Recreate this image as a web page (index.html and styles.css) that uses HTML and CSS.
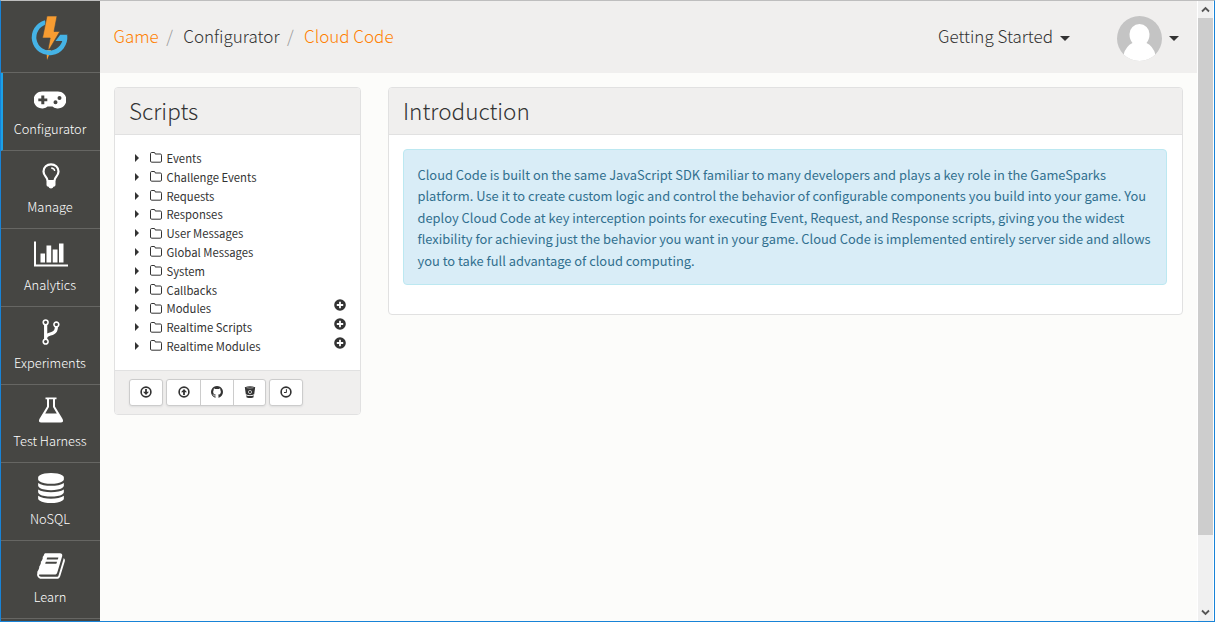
FILE: index.html
```html
<!DOCTYPE html>
<html lang="en">
<head>
<meta charset="utf-8">
<title>Cloud Code</title>
<link rel="stylesheet" href="styles.css">
</head>
<body>
<svg class="defs" width="0" height="0">
  <symbol id="folder" viewBox="0 0 12 11"><path d="M.5 9V1.7Q.5.5 1.700.5H4Q5.200.5 5.200 1.700V2H10.300Q11.500 2 11.500 3.200V9Q11.500 10.200 10.300 10.200H1.700Q.5 10.200.5 9Z" fill="none" stroke="currentColor"/></symbol>
  <symbol id="plus" viewBox="0 0 12 12"><circle cx="6" cy="6" r="5.800" fill="currentColor"/><path d="M6 2.800V9.200M2.800 6H9.200" stroke="#fff" stroke-width="1.800"/></symbol>
</svg>
<div class="window">
  <nav class="sidebar">
    <a class="logo">
      <svg width="50" height="56" viewBox="0 0 50 56"><path d="M20.500 40H25L21 50Z" fill="#f79c31"/><path d="M19.500 12.400A15.500 15.500 0 1 0 39 26" fill="none" stroke="#45b3e6" stroke-width="4.600"/><path d="M41.600 24.700H34.200L29.500 31H37Z" fill="#45b3e6"/><path d="M21 6H31L28 21.500H33.800L23.500 39 22 39.500 24.200 28H16.500Z" fill="#f79c31" stroke="#464643" stroke-width=".6"/></svg>
    </a>
    <a class="item active"><svg width="32" height="18" viewBox="0 0 32 18"><path fill="#fff" fill-rule="evenodd" d="M9 .5H23A8.500 8.500 0 1 1 18.500 15.500H13.500A8.500 8.500 0 1 1 9 .5ZM7.300 4.500V7.500H4.300V10.200H7.300V13.200H10.300V10.200H13.300V7.500H10.300V4.500ZM21.500 9.200A2 2 0 1 0 21.500 13.200 2 2 0 1 0 21.500 9.200ZM25.500 5A2 2 0 1 0 25.500 9 2 2 0 1 0 25.500 5Z"/></svg><span>Configurator</span></a>
    <a class="item"><svg width="18" height="26" viewBox="0 0 18 26"><path d="M5.500 17.500C5.500 14 1.500 13 1.500 8.500 1.500 4 5 1.300 9 1.300S16.500 4 16.500 8.500C16.500 13 12.500 14 12.500 17.500" fill="none" stroke="#fff" stroke-width="2.200"/><path d="M4.500 17H13.500V22Q13.500 23.500 11.500 23.800 11 25.500 9 25.500T6.500 23.800Q4.500 23.500 4.500 22Z" fill="#fff"/><path d="M9.200 5Q12.400 5.200 12.700 8" fill="none" stroke="#fff" stroke-width="1.300"/></svg><span>Manage</span></a>
    <a class="item"><svg width="34" height="26" viewBox="0 0 34 26"><path fill="#fff" d="M0 .5H2V23.500H34V25.500H0ZM6.500 12.500H11V21.500H6.500ZM12.500 4.500H17.200V21.500H12.500ZM18.700 8.500H23.500V21.500H18.700ZM25 2.500H29.500V21.500H25Z"/></svg><span>Analytics</span></a>
    <a class="item"><svg width="30" height="30" viewBox="0 0 1792 1792"><path fill="#fff" d="M672 1472q0-40-28-68t-68-28-68 28-28 68 28 68 68 28 68-28 28-68zm0-1152q0-40-28-68t-68-28-68 28-28 68 28 68 68 28 68-28 28-68zm640 128q0-40-28-68t-68-28-68 28-28 68 28 68 68 28 68-28 28-68zm96 0q0 52-26 96.500t-70 69.500q-2 287-226 414-67 38-203 81-128 40-169.500 71t-41.500 100v26q44 25 70 69.500t26 96.500q0 80-56 136t-136 56-136-56-56-136q0-52 26-96.500t70-69.500v-820q-44-25-70-69.500t-26-96.500q0-80 56-136t136-56 136 56 56 136q0 52-26 96.500t-70 69.500v497q54-26 154-57 55-17 87.500-29.500t70.500-31 59-39.500 40.500-51 28-69.500 8.500-91.500q-44-25-70-69.500t-26-96.500q0-80 56-136t136-56 136 56 56 136z"/></svg><span>Experiments</span></a>
    <a class="item"><svg width="26" height="26" viewBox="0 0 26 26"><path fill="#fff" fill-rule="evenodd" d="M7.500.5H18.500V2.300H17V9.500L24.600 22Q26 25.500 22.800 25.500H3.200Q0 25.500 1.400 22L9 9.500V2.300H7.500ZM11 2.300V10L7.200 16.500H18.800L15 10V2.300Z"/></svg><span>Test Harness</span></a>
    <a class="item"><svg width="30" height="30" viewBox="0 0 1792 1792"><path fill="#fff" d="M896 768q237 0 443-43t325-127v170q0 69-103 128t-280 93.500-385 34.500-385-34.500-280-93.500-103-128v-170q119 84 325 127t443 43zm0 768q237 0 443-43t325-127v170q0 69-103 128t-280 93.500-385 34.500-385-34.500-280-93.500-103-128v-170q119 84 325 127t443 43zm0-384q237 0 443-43t325-127v170q0 69-103 128t-280 93.500-385 34.500-385-34.500-280-93.500-103-128v-170q119 84 325 127t443 43zm0-1152q208 0 385 34.500t280 93.500 103 128v128q0 69-103 128t-280 93.500-385 34.500-385-34.500-280-93.500-103-128v-128q0-69 103-128t280-93.500 385-34.500z"/></svg><span>NoSQL</span></a>
    <a class="item"><svg width="30" height="30" viewBox="0 0 1792 1792"><path fill="#fff" d="M1703 478q40 57 18 129l-275 906q-19 64-76.500 107.500t-122.500 43.500h-923q-77 0-148.500-53.500t-99.500-131.500q-24-67-2-127 0-4 3-27t4-37q1-8-3-21.500t-3-19.500q2-11 8-21t16.500-23.500 16.500-23.500q23-38 45-91.500t30-91.500q3-10 .5-30t-.5-28q3-11 17-28t17-23q21-36 42-92t25-90q1-9-2.500-32t.5-28q4-13 22-30.500t22-22.500q19-26 42.500-84.500t27.500-96.500q1-8-3-25.500t-2-26.500q2-8 9-18t18-23 17-21q8-12 16.500-30.500t15-35 16-36 19.500-32 26.500-23.500 36-11.500 47.500 5.500l-1 3q38-9 51-9h761q74 0 114 56t18 130l-274 906q-36 119-71.500 153.500t-128.500 34.500h-869q-27 0-38 15-11 16-1 43 24 70 144 70h923q29 0 56-15.500t35-41.500l300-987q7-22 5-57 38 15 59 43zm-1064 2q-4 13 2 22.500t20 9.500h608q13 0 25.500-9.500t16.500-22.500l21-64q4-13-2-22.500t-20-9.500h-608q-13 0-25.500 9.500t-16.500 22.500zm-83 256q-4 13 2 22.500t20 9.500h608q13 0 25.500-9.500t16.500-22.500l21-64q4-13-2-22.500t-20-9.500h-608q-13 0-25.500 9.500t-16.500 22.500z"/></svg><span>Learn</span></a>
    <div class="item"></div>
  </nav>
  <div class="page">
    <header class="topbar">
      <div class="crumbs"><a>Game</a><i>/</i><span>Configurator</span><i>/</i><a>Cloud Code</a></div>
      <div class="started"><span>Getting Started</span><b class="caret"></b></div>
      <div class="user"><svg width="45" height="45" viewBox="0 0 45 45"><circle cx="22.500" cy="22.500" r="22.500" fill="#c4c4c4"/><path fill="#fff" d="M22.500 8A10 10 0 0 1 32.500 18Q32.500 23.500 29.500 27 36 30 38.400 38.400A22.500 22.500 0 0 1 6.600 38.400Q9 30 15.500 27 12.500 23.500 12.500 18A10 10 0 0 1 22.500 8Z"/></svg><b class="caret"></b></div>
    </header>
    <main class="content">
      <section class="panel scripts">
        <h2>Scripts</h2>
        <ul class="tree">
          <li><b></b><svg><use href="#folder"/></svg><span>Events</span></li>
          <li><b></b><svg><use href="#folder"/></svg><span>Challenge Events</span></li>
          <li><b></b><svg><use href="#folder"/></svg><span>Requests</span></li>
          <li><b></b><svg><use href="#folder"/></svg><span>Responses</span></li>
          <li><b></b><svg><use href="#folder"/></svg><span>User Messages</span></li>
          <li><b></b><svg><use href="#folder"/></svg><span>Global Messages</span></li>
          <li><b></b><svg><use href="#folder"/></svg><span>System</span></li>
          <li><b></b><svg><use href="#folder"/></svg><span>Callbacks</span></li>
          <li><b></b><svg><use href="#folder"/></svg><span>Modules</span><svg class="add"><use href="#plus"/></svg></li>
          <li><b></b><svg><use href="#folder"/></svg><span>Realtime Scripts</span><svg class="add"><use href="#plus"/></svg></li>
          <li><b></b><svg><use href="#folder"/></svg><span>Realtime Modules</span><svg class="add"><use href="#plus"/></svg></li>
        </ul>
        <footer class="tools">
          <div class="group"><button><svg viewBox="0 0 12 12"><circle cx="6" cy="6" r="4.900" fill="none" stroke="#333" stroke-width="1.600"/><path d="M5.100 3H6.900V5.800H9L6 9 3 5.800H5.100Z" fill="#333"/></svg></button></div>
          <div class="group"><button><svg viewBox="0 0 12 12"><circle cx="6" cy="6" r="4.900" fill="none" stroke="#333" stroke-width="1.600"/><path d="M5.100 9H6.900V6.200H9L6 3 3 6.200H5.100Z" fill="#333"/></svg></button><button><svg viewBox="128 128 1536 1536"><path fill="#333" d="M896 128q209 0 385.500 103t279.500 279.500 103 385.500q0 251-146.500 451.500t-378.500 277.500q-27 5-40-7t-13-30q0-3 .5-76.500t.5-134.500q0-97-52-142 57-6 102.500-18t94-39 81-66.500 53-105 20.500-150.500q0-119-79-206 37-91-8-204-28-9-81 11t-92 44l-38 24q-93-26-192-26t-192 26q-16-11-42.500-27t-83.500-38.500-85-13.500q-45 113-8 204-79 87-79 206 0 85 20.500 150t52.500 105 80.500 67 94 39 102.500 18q-39 36-49 103-21 10-45 15t-57 5-65.500-21.500-55.500-62.500q-19-32-48.500-52t-49.500-24l-20-3q-21 0-29 4.500t-5 11.500 9 14 13 12l7 5q22 10 43.500 38t31.500 51l10 23q13 38 44 61.500t67 30 69.500 7 55.500-3.500l23-4q0 38 .5 88.500t.5 54.500q0 18-13 30t-40 7q-232-77-378.500-277.500t-146.500-451.500q0-209 103-385.500t279.500-279.500 385.500-103z"/></svg></button><button><svg viewBox="0 0 12 12"><path fill="#333" d="M.8 1.200Q6-.8 11.200 1.200L10.200 8.200Q6 10.400 1.800 8.200ZM2.200 9.200Q6 11 9.800 9.200L9.400 11.400Q6 12.800 2.600 11.400Z"/><path d="M2.500 1.700Q6 2.700 9.500 1.700" stroke="#bbb" stroke-width=".7" fill="none"/><circle cx="6" cy="6" r="1.600" fill="none" stroke="#ccc" stroke-width=".9"/></svg></button></div>
          <div class="group"><button><svg viewBox="0 0 12 12"><circle cx="6" cy="6" r="4.900" fill="none" stroke="#333" stroke-width="1.600"/><path d="M6.400 3.200V6.500H4" fill="none" stroke="#333"/></svg></button></div>
        </footer>
      </section>
      <section class="panel intro">
        <h2>Introduction</h2>
        <p class="alert">Cloud Code is built on the same JavaScript SDK familiar to many developers and plays a key role in the GameSparks<br>platform. Use it to create custom logic and control the behavior of configurable components you build into your game. You<br>deploy Cloud Code at key interception points for executing Event, Request, and Response scripts, giving you the widest<br>flexibility for achieving just the behavior you want in your game. Cloud Code is implemented entirely server side and allows<br>you to take full advantage of cloud computing.</p>
      </section>
    </main>
  </div>
  <aside class="scrollbar">
    <svg width="15" height="17" viewBox="0 0 15 17"><path d="M4 10.500 7.500 7 11 10.500" fill="none" stroke="#555" stroke-width="1.800"/></svg>
    <div class="thumb"></div>
    <svg width="15" height="17" viewBox="0 0 15 17"><path d="M4 6.500 7.500 10 11 6.500" fill="none" stroke="#555" stroke-width="1.800"/></svg>
  </aside>
</div>
</body>
</html>
```
FILE: styles.css
```css
* { box-sizing: border-box; }
body { margin: 0; font-family: "Noto Sans CJK SC", "Open Sans", sans-serif; color: #333; }
svg { display: block; flex: none; }
.defs { position: absolute; }
.window { display: flex; width: 1215px; height: 622px; overflow: hidden; border: 1px solid #1883d7; border-top-color: #bebebe; background: #fcfcfa; }
.sidebar { width: 99px; height: 620px; overflow: hidden; background: #464643; flex: none; }
.logo { display: flex; height: 72px; padding: 9px 0 0 25px; border-bottom: 1px solid #666663; }
.item { display: flex; flex-direction: column; align-items: center; height: 78px; border-bottom: 1px solid #666663; color: #fff; font-size: 12.850px; font-weight: 300; line-height: 18px; white-space: nowrap; }
.item svg { height: 30px; margin-top: 10px; }
.item span { margin-top: 7px; padding-right: 1px; }
.item.active { border-left: 2px solid #1ba1e8; padding-right: 3px; }
.item.active svg { margin-top: 12px; }
.item.active span { margin-top: 5px; padding-right: 0; }
.page { width: 1097px; flex: none; }
.topbar { display: flex; align-items: center; height: 72px; padding-left: 13.500px; background: #f0efee; font-size: 17px; font-weight: 300; line-height: 26px; white-space: nowrap; }
.crumbs { display: flex; width: 824.500px; padding-bottom: 2px; }
.crumbs a { color: #ff7f00; }
.crumbs i { color: #999; font-style: normal; width: 24.500px; padding-left: 7.500px; }
.started, .user { display: flex; align-items: center; }
.started { width: 179px; gap: 7px; padding-bottom: 2px; }
.user { gap: 7px; padding-top: 3px; }
.caret { border: 5px solid transparent; border-top-color: #333; border-bottom: 0; margin-top: 4px; }
.user .caret { margin-top: 0; }
.content { display: flex; align-items: flex-start; gap: 27px; padding: 14px; }
.panel { background: #fff; border: 1px solid #e1e1e1; border-radius: 4px; overflow: hidden; }
.panel h2 { margin: 0; height: 47px; padding-left: 14px; background: #f0efee; border-bottom: 1px solid #e1e1e1; font-size: 22.500px; font-weight: 300; line-height: 45px; }
.scripts { width: 247px; height: 328px; flex: none; }
.intro { width: 795px; height: 228px; flex: none; }
.tree { list-style: none; margin: 0; padding: 13.600px 14px 0 20px; height: 235px; font-size: 11.300px; }
.tree li { display: flex; align-items: center; height: 18.800px; line-height: 18px; white-space: nowrap; }
.tree b { border: 4px solid transparent; border-left: 4.500px solid #333; border-right: 0; margin-right: 11px; }
.tree svg { width: 12px; height: 11px; margin-right: 4.500px; }
.tree .add { height: 12px; margin: -6px 0 0 auto; color: #333; }
.tools { display: flex; gap: 3px; height: 44px; padding: 8px 14px; background: #f0efee; border-top: 1px solid #e1e1e1; }
.group { display: flex; height: 27px; border: 1px solid #ccc; border-radius: 3px; background: #fff; box-shadow: 0 1px 2px #ddd; }
.group button { display: flex; align-items: center; justify-content: center; width: 32px; padding: 0 0 1px; border: 0; background: none; }
.group button + button { width: 33px; border-left: 1px solid #ccc; }
.group button:first-child:not(:last-child) { width: 33px; }
.group button:last-child:not(:first-child) { width: 32px; }
.group svg { width: 12px; height: 12px; }
.alert { margin: 14px; width: 764px; height: 136px; padding: 14px 13.500px; background: #d9edf7; border: 1px solid #bce8f1; border-radius: 4px; color: #31708f; font-size: 12.860px; line-height: 21.450px; white-space: nowrap; }
.scrollbar { display: flex; flex-direction: column; width: 17px; background: #f0f0f0; border-left: 1px solid #fff; border-right: 1px solid #fff; }
.thumb { height: 517px; margin-bottom: auto; background: #cdcdcd; }
```
